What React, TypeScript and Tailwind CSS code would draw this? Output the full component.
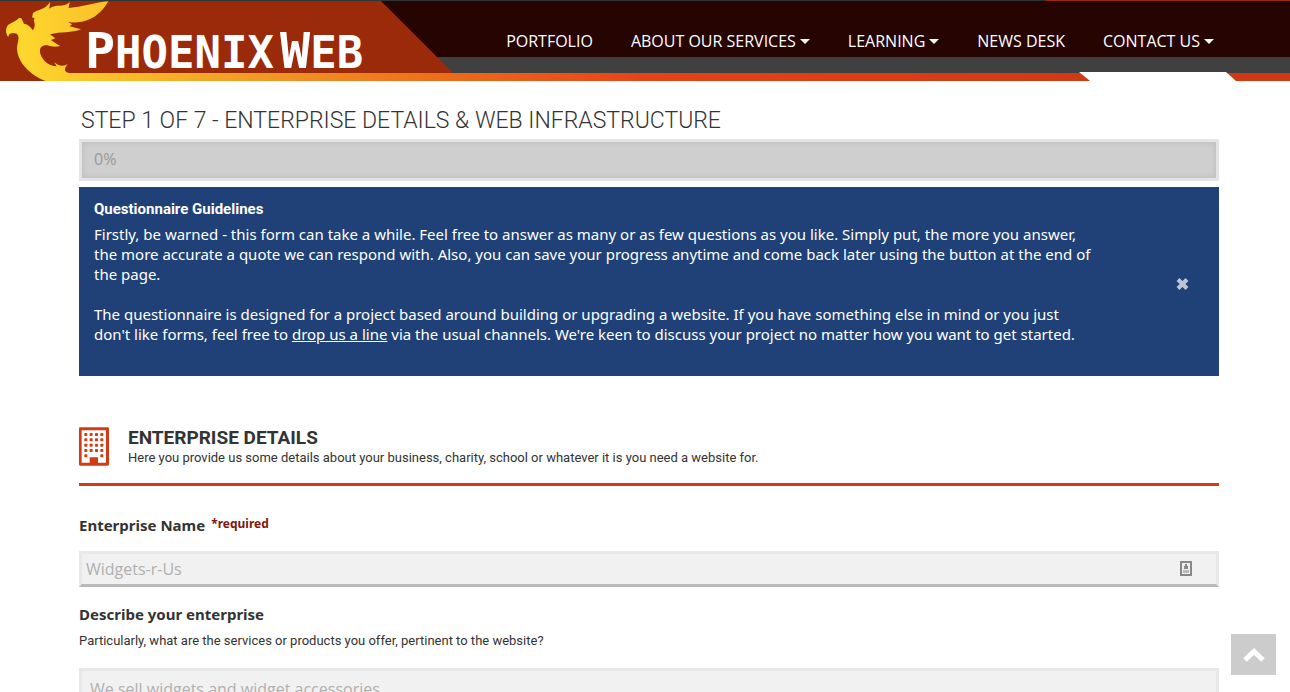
import { useState } from 'react';

const navItems = [
    { label: 'Portfolio', menu: false },
    { label: 'About our services', menu: true },
    { label: 'Learning', menu: true },
    { label: 'News desk', menu: false },
    { label: 'Contact us', menu: true },
];

const windowRows = [22, 38, 54, 70, 86];
const windowCols = [18, 34, 50, 66];

const Logo = () => (
    <a href="#" aria-label="PhoenixWeb home" className="absolute left-0 top-0 block h-[81px] w-[453px]">
        <svg className="absolute inset-0" width="453" height="81" viewBox="0 0 1359 243" aria-hidden="true">
            <defs>
                <linearGradient id="flame" gradientUnits="userSpaceOnUse" x1="0" y1="0" x2="1359" y2="0">
                    <stop offset="0" stopColor="#ffdc2e" />
                    <stop offset="0.5" stopColor="#f3a125" />
                    <stop offset="1" stopColor="#ec6a1a" />
                </linearGradient>
            </defs>
            <path d="M0 3H1143L1359 219H240V243H0Z" fill="#9b2a0b" />
            <path
                d="M325 4C305 42 268 66 232 67Q218 69 203 65L216 73L209 79L243 88C215 99 182 95 150 103L166 115L153 120C163 128 171 133 181 138C165 142 153 139 142 136C122 134 117 148 121 161C128 184 148 197 170 199L162 186Q173 197 187 197Q196 197 204 192C197 198 193 207 196 213Q200 219 214 219H1359V243H136C92 226 52 188 51 145C51 127 62 111 50 101C36 96 26 99 25 111C16 103 16 82 25 74C35 68 48 63 58 53L64 55L72 71C83 73 93 80 98 91C107 82 104 68 101 60L104 55L96 52L99 39C114 28 136 29 150 6L148 26C169 9 190 26 209 6L206 24C252 20 286 7 325 4Z"
                fill="url(#flame)"
            />
        </svg>
        <span className="absolute left-[85px] top-[26px] flex items-baseline gap-1.5 font-['DejaVu_Sans_Mono',monospace] text-[44px] leading-[50px] font-bold text-white uppercase">
            <span><span className="text-[50px]">P</span>hoenix</span>
            <span><span className="text-[50px]">W</span>eb</span>
        </span>
    </a>
);

const BuildingIcon = () => (
    <svg className="shrink-0" width="31" height="40" viewBox="0 0 93 120" fill="#d23c12" aria-hidden="true">
        <path fillRule="evenodd" d="M3 4H86Q90 4 90 8V115Q90 119 86 119H3Q0 119 0 115V8Q0 4 3 4ZM8 13V110H32V94H57V110H81V13Z" />
        {windowRows.map((y, row) =>
            windowCols
                .filter((_, col) => row < 4 || col === 0 || col === 3)
                .map(x => <rect key={`${x}-${y}`} x={x - 2} y={y - 1} width="9" height="9" rx="2" />)
        )}
    </svg>
);

const App = () => {
    const [showGuide, setShowGuide] = useState(true);

    return (
        <div className="h-screen overflow-x-hidden overflow-y-auto bg-white font-['Noto_Sans',sans-serif] text-[#333] [scrollbar-width:none]">
            <header className="relative">
                <div className="flex h-px bg-[#303636]">
                    <div className="ml-auto w-[244px] bg-[#9b2a0b]" />
                </div>
                <nav className="flex h-14 justify-end gap-[38px] bg-[#250402] pt-7 pr-[76px]">
                    {navItems.map(item => (
                        <a key={item.label} href="#" className="flex items-center gap-1 font-['Open_Sans',sans-serif] text-[16px] leading-6 h-6 whitespace-nowrap text-white uppercase">
                            {item.label}
                            {item.menu && (
                                <svg width="10" height="5" viewBox="0 0 10 5" fill="currentColor" aria-hidden="true">
                                    <path d="M0 0H10L5 5Z" />
                                </svg>
                            )}
                        </a>
                    ))}
                </nav>
                <div className="h-4 bg-[#404040]" />
                <div className="h-2 bg-linear-to-r from-[#ec6a1a] from-35% via-[#e64316] via-50% to-[#cf3a12] to-85%" />
                <svg className="absolute right-[54px] bottom-0" width="157" height="9" viewBox="0 0 157 9" fill="#fff" aria-hidden="true">
                    <path d="M0 0H147L157 9H11Z" />
                </svg>
                <Logo />
            </header>

            <main className="pr-[71px] pl-[79px]">
                <h1 className="pt-[25px] pl-[2px] font-['Roboto',sans-serif] text-[23px] leading-[30px] font-light uppercase">
                    Step 1 of 7 - Enterprise Details &amp; Web Infrastructure
                </h1>
                <div
                    role="progressbar"
                    aria-valuenow={0}
                    aria-label="Questionnaire progress"
                    className="mt-[3px] h-[42px] border-3 border-[#e4e4e4] bg-[#cfcfcf] px-3 font-['Open_Sans',sans-serif] text-[16px] leading-[34px] text-[#999] shadow-[inset_0_0_4px_2px_#c2c2c2]"
                >
                    0%
                </div>

                {showGuide && (
                    <section className="mt-[6px] flex items-center bg-[#204177] pt-3 pr-[30px] pb-8 pl-[15px] text-white">
                        <div className="flex-1 text-[15px] leading-5">
                            <h2 className="mb-[5px] font-['Roboto',sans-serif] font-bold">Questionnaire Guidelines</h2>
                            <p>
                                Firstly, be warned - this form can take a while. Feel free to answer as many or as few questions as you like. Simply put, the more you answer,
                                <br />
                                the more accurate a quote we can respond with. Also, you can save your progress anytime and come back later using the button at the end of
                                <br />
                                the page.
                            </p>
                            <p className="mt-5">
                                The questionnaire is designed for a project based around building or upgrading a website. If you have something else in mind or you just
                                <br />
                                don't like forms, feel free to <a href="#" className="underline">drop us a line</a> via the usual channels. We're keen to discuss your project no matter how you want to get started.
                            </p>
                        </div>
                        <button type="button" aria-label="Close" className="mt-6 text-[#bcc6d7]" onClick={() => setShowGuide(false)}>
                            <svg width="13" height="12" viewBox="0 0 13 12" stroke="currentColor" strokeWidth="4" aria-hidden="true">
                                <path d="M2 1.5L11 10.5M11 1.5L2 10.5" />
                            </svg>
                        </button>
                    </section>
                )}

                <div className="mt-[50px] flex gap-[18px] border-b-3 border-[#d23c12] pb-[17px]">
                    <BuildingIcon />
                    <div>
                        <h2 className="font-['Roboto',sans-serif] text-[19px] leading-6 font-bold uppercase">Enterprise Details</h2>
                        <p className="font-['Roboto',sans-serif] text-[13px] leading-4">Here you provide us some details about your business, charity, school or whatever it is you need a website for.</p>
                    </div>
                </div>

                <form>
                    <label htmlFor="name" className="mt-[29px] flex items-start gap-[6px] text-[15px] leading-5 font-bold">
                        Enterprise Name <span className="text-[12px] leading-[18px] text-[#80170a]">*required</span>
                    </label>
                    <div className="relative mt-4">
                        <input
                            id="name"
                            type="text"
                            placeholder="Widgets-r-Us"
                            className="block h-9 w-full border-3 border-[#e8e8e8] border-b-[#bababa] bg-[#f1f1f1] px-1 font-['Open_Sans',sans-serif] text-[16px] placeholder:text-[#b0b0b0]"
                        />
                        <svg className="absolute top-[10px] right-[27px]" width="12" height="15" viewBox="0 0 12 15" aria-hidden="true">
                            <rect x="1" y="1" width="10" height="13" fill="#eee" stroke="#888" strokeWidth="2" />
                            <path d="M5 3H7V5H8V8H4V5H5Z" fill="#888" />
                            <path d="M3 9H9V12H3Z" fill="#bbb" />
                        </svg>
                    </div>

                    <label htmlFor="about" className="mt-[17px] block text-[15px] leading-5 font-bold">Describe your enterprise</label>
                    <p id="about-hint" className="mt-[9px] font-['Roboto',sans-serif] text-[13px] leading-4">Particularly, what are the services or products you offer, pertinent to the website?</p>
                    <textarea
                        id="about"
                        aria-describedby="about-hint"
                        rows={5}
                        placeholder="We sell widgets and widget accessories"
                        className="mt-[19px] block w-full resize-none border-3 border-[#e8e8e8] border-b-[#bababa] bg-[#f1f1f1] px-2 py-2 font-['Open_Sans',sans-serif] text-[16px] leading-5 placeholder:text-[#b0b0b0]"
                    />
                </form>
            </main>

            <button type="button" aria-label="Back to top" className="fixed right-[14px] bottom-[17px] flex h-[41px] w-[45px] items-center justify-center bg-[#ccc] text-white">
                <svg width="22" height="14" viewBox="0 0 22 14" fill="none" stroke="currentColor" strokeWidth="5" aria-hidden="true">
                    <path d="M2 12L11 3.5L20 12" />
                </svg>
            </button>
        </div>
    );
};

export default App;
